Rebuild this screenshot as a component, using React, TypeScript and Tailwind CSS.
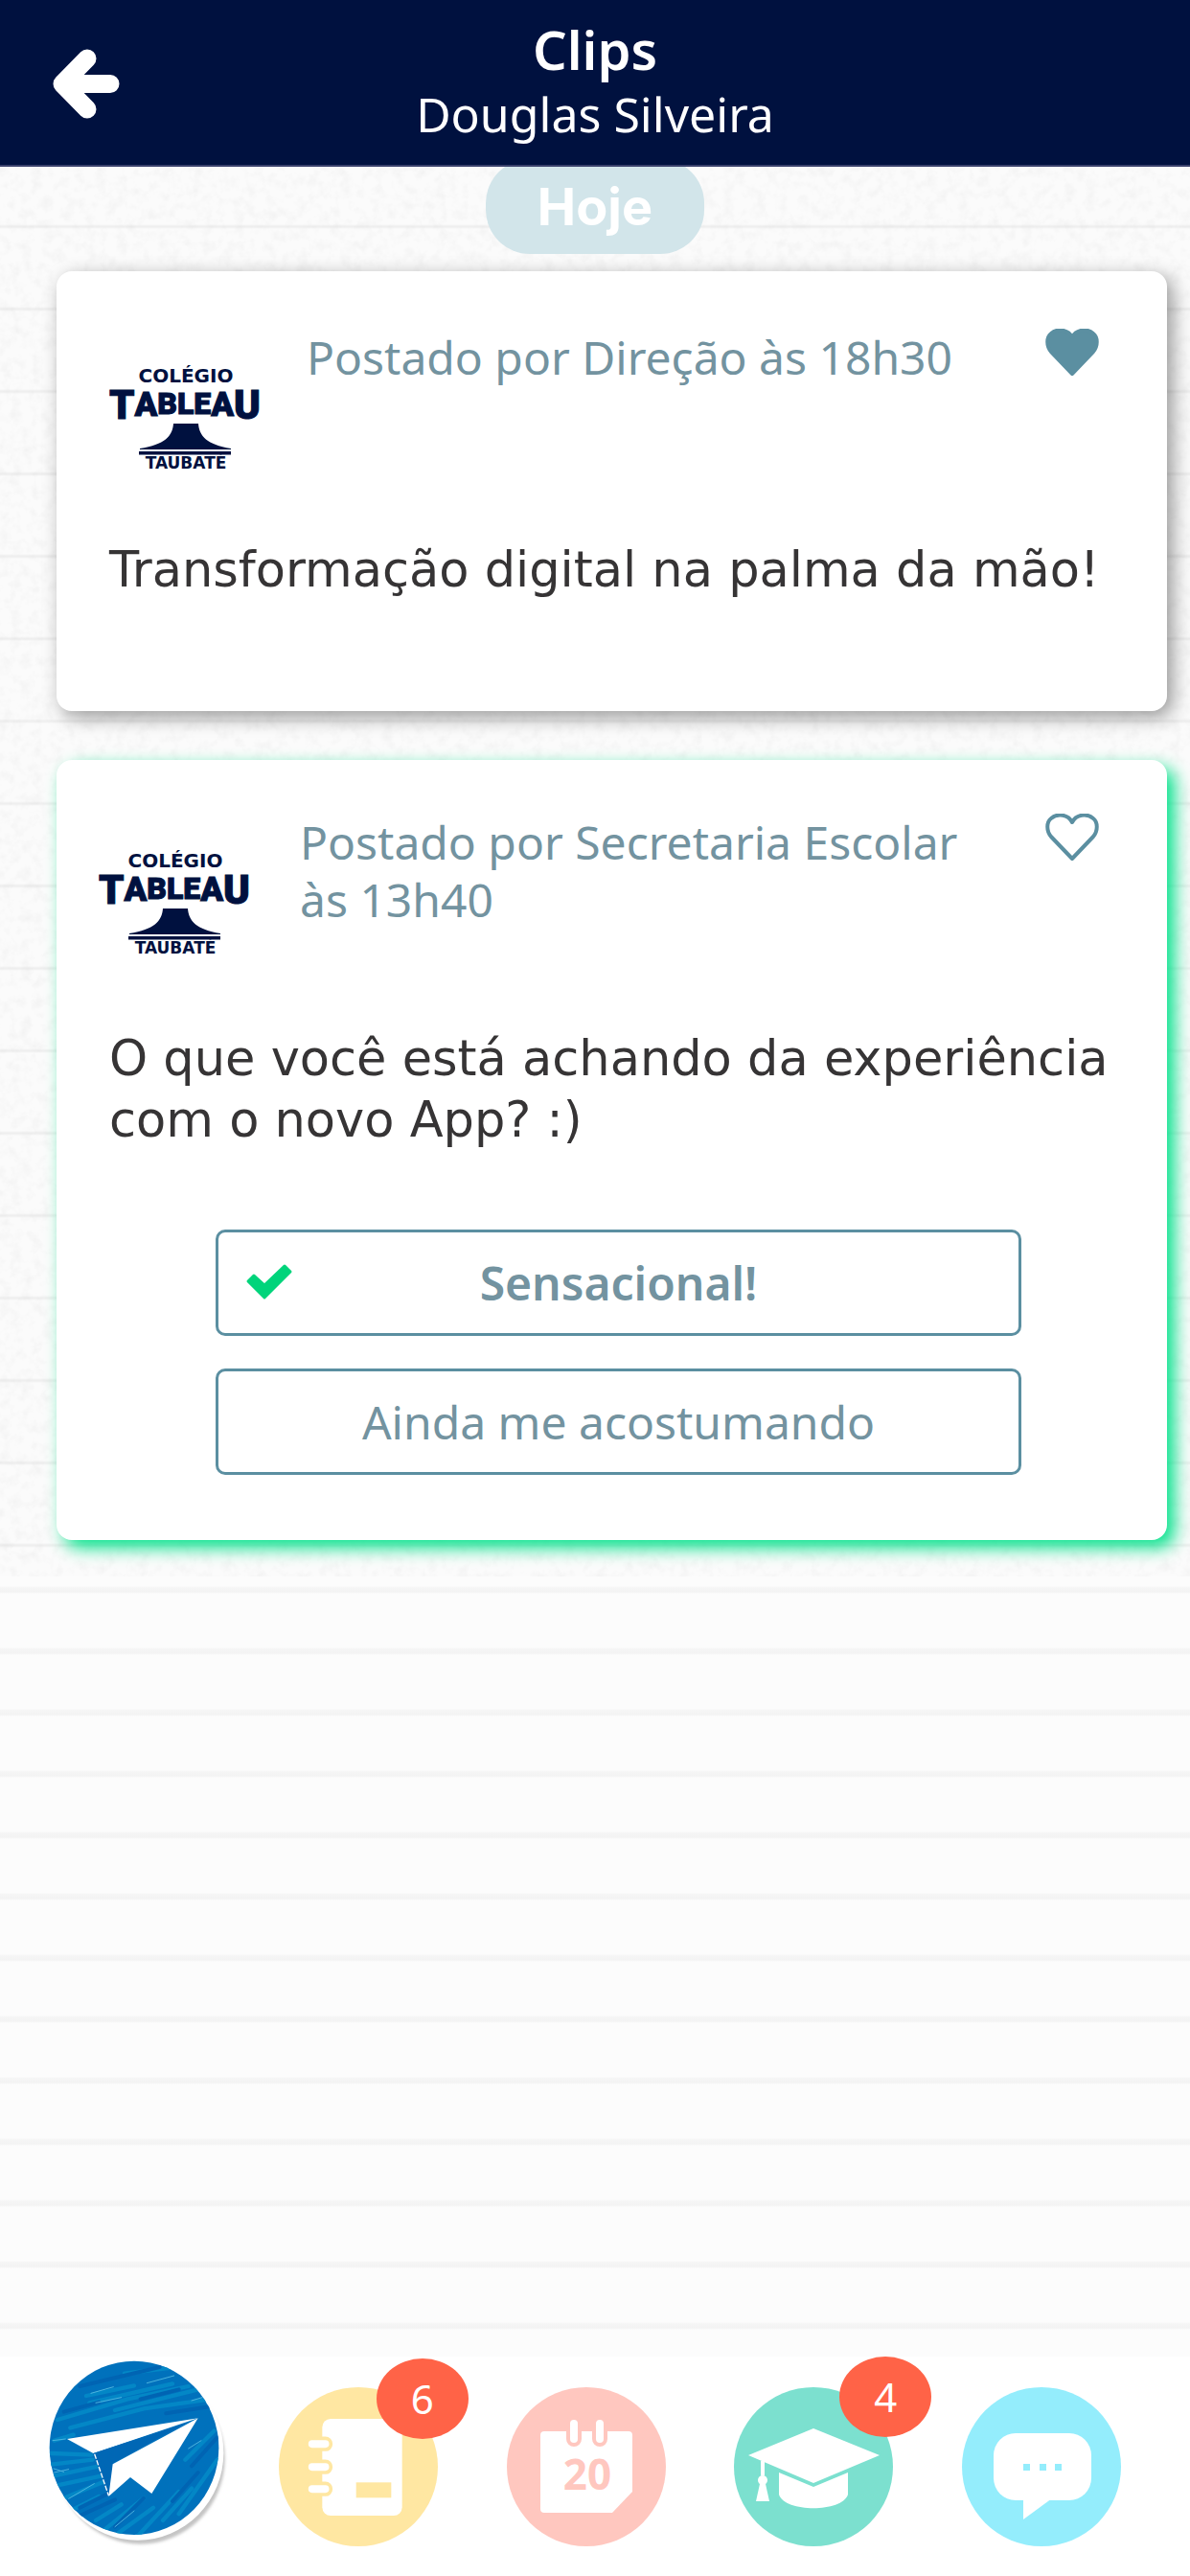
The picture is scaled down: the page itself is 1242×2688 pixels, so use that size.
import type { ReactNode } from "react";

const SANS = "font-['Noto_Sans',sans-serif]";
const BODY = "font-['DejaVu_Sans',sans-serif]";

function SchoolLogo() {
  return (
    <svg viewBox="0 0 170 125" className="h-[125px] w-[170px] shrink-0" fill="#00113f" role="img" aria-label="Colégio Tableau Taubaté">
      <text x="84" y="24" fontSize="20" fontWeight="700" textAnchor="middle" fontFamily="DejaVu Sans">COLÉGIO</text>
      <text x="83" y="0" textAnchor="middle" fontWeight="900" fontFamily="Roboto, sans-serif" stroke="#00113f" strokeWidth="1">
        <tspan fontSize="42" dy="62">T</tspan>
        <tspan fontSize="35" dy="-3">A</tspan>
        <tspan fontSize="32" dy="-2">B</tspan>
        <tspan fontSize="32">L</tspan>
        <tspan fontSize="32">E</tspan>
        <tspan fontSize="35" dy="2">A</tspan>
        <tspan fontSize="42" dy="3">U</tspan>
      </text>
      <path d="M71 67H97C98 80 106 89 131 93V94H36V93C62 89 70 80 71 67Z" />
      <path d="M35 96H131V99.500H35Z" />
      <text x="84" y="114" fontSize="17" fontWeight="700" textAnchor="middle" fontFamily="DejaVu Sans">TAUBATÉ</text>
    </svg>
  );
}

function Heart({ filled }: { filled: boolean }) {
  return (
    <svg viewBox="0 0 56 50" className="h-[50px] w-[56px]" fill={filled ? "#5b8fa1" : "none"} stroke="#5b8fa1" strokeWidth="4" strokeLinejoin="round">
      <path d="M28 47 6 24C1 18 1 9 6 5 13 -1 24 1 28 9 32 1 43 -1 50 5 55 9 55 18 50 24Z" />
    </svg>
  );
}

type PostProps = {
  author: string;
  body: string;
  liked: boolean;
  cardClass: string;
  rowClass: string;
  children?: ReactNode;
};

function Post({ author, body, liked, cardClass, rowClass, children }: PostProps) {
  return (
    <article className={`rounded-2xl bg-white ${cardClass}`}>
      <header className={`flex min-h-[280px] items-start pr-[71px] ${rowClass}`}>
        <div className="mt-8">
          <SchoolLogo />
        </div>
        <h2 className="flex-1 text-[48px] leading-[60px] text-[#7393a0]">{author}</h2>
        <button type="button" aria-label="Curtir" aria-pressed={liked}>
          <Heart filled={liked} />
        </button>
      </header>
      <p className={`${BODY} pr-8 pl-[55px] text-[51px] leading-[64px] text-[#363435]`}>{body}</p>
      {children}
    </article>
  );
}

function Option({ label, selected = false }: { label: string; selected?: boolean }) {
  return (
    <button
      type="button"
      aria-pressed={selected}
      className={`relative flex h-[111px] items-center justify-center rounded-[10px] border-[3px] border-[#5b8fa1] text-[48px] text-[#7393a0] ${selected ? "font-semibold" : ""}`}
    >
      {selected && (
        <svg viewBox="0 0 50 40" className="absolute left-7 top-8 h-10 w-[50px]" fill="#00d47b" stroke="#00d47b" strokeWidth="3" strokeLinejoin="round">
          <path d="M3 19 9 13 20 23 41 3 47 9 20 36Z" />
        </svg>
      )}
      {label}
    </button>
  );
}

function Badge({ count, place }: { count: number; place: string }) {
  return (
    <span className={`absolute flex h-[84px] w-24 items-center justify-center rounded-[50%] bg-[#ff6347] text-[42px] leading-none text-white ${place}`}>
      {count}
    </span>
  );
}

function PlaneIcon() {
  return (
    <svg viewBox="33 45 504 576" className="h-48 w-[168px] overflow-visible">
      <defs>
        <clipPath id="disc">
          <ellipse cx="300" cy="313" rx="265" ry="272" />
        </clipPath>
        <filter id="soft">
          <feGaussianBlur stdDeviation="5" />
        </filter>
      </defs>
      <ellipse cx="320" cy="346" rx="264" ry="268" fill="#c4c4c4" filter="url(#soft)" />
      <ellipse cx="311" cy="328" rx="269" ry="274" fill="#fff" />
      <g clipPath="url(#disc)">
        <rect x="30" y="35" width="540" height="560" fill="#0071bc" />
        <g stroke="#0387c6" fill="none" strokeWidth="13" strokeLinecap="round">
          <path d="M270 80 430 60M150 150 300 118M160 172 420 112M60 225 280 160 470 120M240 195 500 130M100 250 330 190 540 160M50 290 110 272" />
          <path d="M40 330 165 335M40 365 170 350M50 400 190 370M60 430 200 400M80 470 215 415M110 505 190 465M180 540 260 490M200 575 330 470M250 580 360 500M310 590 440 450M390 540 480 440M440 520 560 350M460 350 550 260" />
        </g>
        <g stroke="#0064b3" fill="none" strokeWidth="12" strokeLinecap="round">
          <path d="M130 120 380 60M80 200 190 170M320 160 440 130M400 205 560 180M130 500 220 455M120 530 240 475M330 470 240 560M480 370 560 280M420 480 500 390" />
        </g>
        <g stroke="#4db4de" fill="none" strokeWidth="3" strokeLinecap="round">
          <path d="M165 142 235 122M340 110 425 87M180 172 260 155M480 165 520 153M48 378 80 388M50 390 95 380M95 472 175 425M470 315 510 290M240 560 300 510M45 290 85 285" />
        </g>
      </g>
      <path d="M90 285 500 220 172 330Z" fill="#fff" />
      <path d="M172 330 460 236 235 360 220 465Z" fill="#0067b5" />
      <path d="M500 220 355 456 288 405 220 465 233 364Z" fill="#fff" />
      <path d="M176 332 220 462" stroke="#fff" strokeWidth="4" strokeDasharray="16 5" />
    </svg>
  );
}

function NotebookIcon() {
  return (
    <svg viewBox="879 214 498 498" className="size-[166px]">
      <circle cx="1128" cy="463" r="249" fill="#ffe7a2" />
      <rect x="1015" y="313" width="250" height="303" rx="26" fill="#fff" />
      <g fill="#fff" stroke="#ffe7a2" strokeWidth="11">
        <rect x="966" y="374" width="76" height="35" rx="17" />
        <rect x="966" y="446" width="76" height="35" rx="17" />
        <rect x="966" y="515" width="76" height="35" rx="17" />
      </g>
      <rect x="1121" y="512" width="110" height="48" fill="#ffe7a2" />
    </svg>
  );
}

function CalendarIcon() {
  return (
    <svg viewBox="0 0 166 166" className="size-[166px]">
      <circle cx="83" cy="83" r="83" fill="#ffc7bf" />
      <path d="M39 46H127Q131 46 131 50V109L110 131H39Q35 131 35 127V50Q35 46 39 46Z" fill="#fff" />
      <g fill="#fff" stroke="#ffc7bf" strokeWidth="4">
        <rect x="64" y="32" width="12" height="28" rx="6" />
        <rect x="91" y="32" width="12" height="28" rx="6" />
      </g>
      <text x="84" y="107" fontSize="44" fontWeight="700" textAnchor="middle" fill="#ffc7bf" fontFamily="Noto Sans, sans-serif">20</text>
    </svg>
  );
}

function CapIcon() {
  return (
    <svg viewBox="0 0 166 166" className="size-[166px]">
      <circle cx="83" cy="83" r="83" fill="#7ce0cf" />
      <g fill="#fff">
        <path d="M83 43 152 71 83 100 15 71Z" />
        <path d="M47 89 83 104 119 89V112C113 131 53 131 47 112Z" />
        <path d="M28 77H32V92H28Z" />
        <circle cx="30" cy="97" r="5" />
        <path d="M27 101H33L37 119H23Z" />
      </g>
    </svg>
  );
}

function ChatIcon() {
  return (
    <svg viewBox="0 0 166 166" className="size-[166px]">
      <circle cx="83" cy="83" r="83" fill="#94edfc" />
      <rect x="33" y="48" width="102" height="70" rx="23" fill="#fff" />
      <path d="M64 116V138L94 116Z" fill="#fff" />
      <g fill="#94edfc">
        <rect x="64" y="80" width="7" height="7" />
        <rect x="81" y="80" width="7" height="7" />
        <rect x="97" y="80" width="7" height="7" />
      </g>
    </svg>
  );
}

function PaperGrain() {
  return (
    <svg className="pointer-events-none absolute inset-0 size-full" aria-hidden="true">
      <filter id="grain" x="0" y="0" width="100%" height="100%">
        <feTurbulence type="fractalNoise" baseFrequency="0.09" numOctaves="3" seed="4" />
        <feColorMatrix values="0 0 0 0 0.6  0 0 0 0 0.6  0 0 0 0 0.6  0.35 0 0 0 -0.15" />
      </filter>
      <rect width="100%" height="100%" filter="url(#grain)" />
    </svg>
  );
}

export default function App() {
  return (
    <div className={`${SANS} flex min-h-screen flex-col bg-white`}>
      <header className="relative z-10 flex h-[174px] items-center justify-center border-b-2 border-[#39406b] bg-[#00113f] text-white">
        <button type="button" aria-label="Voltar" className="absolute left-[54px] top-[50px]">
          <svg viewBox="0 0 71 75" className="h-[75px] w-[71px]" fill="none" stroke="#fff" strokeWidth="19" strokeLinecap="round" strokeLinejoin="round">
            <path d="M37 11 11 37.500 37 64M14 37.500H61" />
          </svg>
        </button>
        <div className="pb-1 text-center">
          <h1 className="text-[56px] leading-[70px] font-semibold">Clips</h1>
          <p className="text-[50px] leading-[66px]">Douglas Silveira</p>
        </div>
      </header>

      <main className="flex-1 bg-[repeating-linear-gradient(to_top,#fcfcfc_0px,#fcfcfc_28px,#f3f3f3_30px,#f5f5f5_34px,#fcfcfc_36px,#fcfcfc_64px)]">
        <section className="relative bg-[#fbfbfb] bg-[repeating-linear-gradient(to_bottom,transparent_0px,transparent_60px,#efefef_62px,#efefef_63px,transparent_65px,transparent_86px)] pr-6 pb-[38px] pl-[59px]">
          <PaperGrain />
          <div className="relative flex flex-col">
            <div className="-mt-2 mr-[35px] flex h-[99px] w-[228px] items-center justify-center self-center rounded-[46px] bg-[#d2e5ea] font-['Inter',sans-serif] text-[54px] font-bold text-white">
              Hoje
            </div>
            <div className="mt-[18px] flex flex-col gap-[51px]">
              <Post
                author="Postado por Direção às 18h30"
                body="Transformação digital na palma da mão!"
                liked
                cardClass="pb-[115px] shadow-[6px_6px_20px_rgba(0,0,0,0.4)]"
                rowClass="gap-10 pt-[60px] pl-[51px]"
              />
              <Post
                author="Postado por Secretaria Escolar às 13h40"
                body="O que você está achando da experiência com o novo App? :)"
                liked={false}
                cardClass="pb-[68px] shadow-[8px_8px_18px_#00e28a]"
                rowClass="gap-11 pt-14 pl-10"
              >
                <div className="mt-[82px] mr-[152px] ml-[166px] flex flex-col gap-[34px]">
                  <Option label="Sensacional!" selected />
                  <Option label="Ainda me acostumando" />
                </div>
              </Post>
            </div>
          </div>
        </section>
      </main>

      <nav className="flex h-[229px] items-end justify-between bg-white pr-[72px] pb-[31px] pl-[51px]">
        <button type="button" aria-label="Clips">
          <PlaneIcon />
        </button>
        <button type="button" aria-label="Agenda" className="relative">
          <NotebookIcon />
          <Badge count={6} place="-top-[30px] left-[102px]" />
        </button>
        <button type="button" aria-label="Calendário">
          <CalendarIcon />
        </button>
        <button type="button" aria-label="Acadêmico" className="relative">
          <CapIcon />
          <Badge count={4} place="-top-8 left-[110px]" />
        </button>
        <button type="button" aria-label="Mensagens">
          <ChatIcon />
        </button>
      </nav>
    </div>
  );
}
